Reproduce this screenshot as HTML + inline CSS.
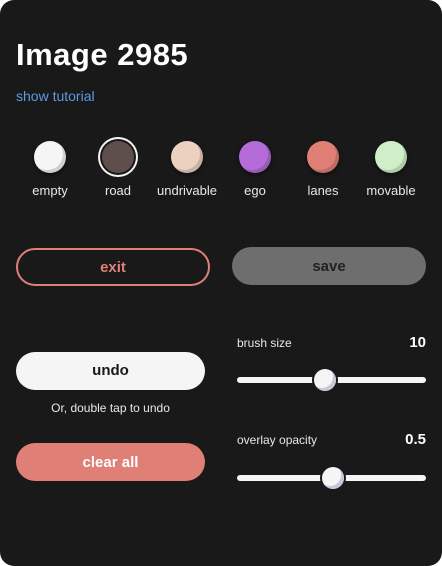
<!DOCTYPE html><html><head><style>
body{margin:0;width:442px;height:566px;background:#fff;font-family:"Liberation Sans",sans-serif;overflow:hidden}
.p{position:absolute;left:0;top:0;width:442px;height:566px;background:#19191a;border-radius:14px}
.a{position:absolute}
.c{position:absolute;width:32px;height:32px;border-radius:50%;top:141px;box-shadow:inset -3px -3px 0 rgba(0,0,0,.15),0 2px 4px rgba(0,0,0,.5)}
.l{position:absolute;top:183px;width:80px;text-align:center;color:#e8e8e8;font-size:13px}
.btn{position:absolute;border-radius:19px;text-align:center;font-weight:bold;font-size:15px;box-sizing:border-box}
.tr{position:absolute;left:237px;width:189px;height:6px;border-radius:3px;background:#f5f5f5}
.th{position:absolute;width:22px;height:22px;border-radius:50%;background:#f5f5f5;box-shadow:inset -3px -3px 0 #c8c8d8,0 0 0 2px #19191a}
</style></head><body><div class="p">
<div class="a" style="left:16px;top:37px;color:#fff;font-size:31px;font-weight:bold;letter-spacing:0.5px">Image 2985</div>
<div class="a" style="left:16px;top:88px;color:#5b9be0;font-size:14px">show tutorial</div>
<div class="c" style="left:34px;background:#f5f5f5"></div>
<div class="c" style="left:102px;background:#5e4e4c;box-shadow:0 0 0 2px #19191a,0 0 0 4px #f5f5f5"></div>
<div class="c" style="left:171px;background:#ecd0c0"></div>
<div class="c" style="left:239px;background:#b56cd8"></div>
<div class="c" style="left:307px;background:#e07f76"></div>
<div class="c" style="left:375px;background:#d0efc8"></div>
<div class="l" style="left:10px">empty</div>
<div class="l" style="left:78px">road</div>
<div class="l" style="left:147px">undrivable</div>
<div class="l" style="left:215px">ego</div>
<div class="l" style="left:283px">lanes</div>
<div class="l" style="left:351px">movable</div>
<div class="btn" style="left:16px;top:248px;width:194px;height:38px;border:2px solid #e07f76;color:#e07f76;line-height:36px">exit</div>
<div class="btn" style="left:232px;top:247px;width:194px;height:38px;background:#6e6e6e;color:#222;line-height:40px">save</div>
<div class="btn" style="left:16px;top:352px;width:189px;height:38px;background:#f5f5f5;color:#19191a;line-height:38px">undo</div>
<div class="a" style="left:16px;top:401px;width:189px;text-align:center;color:#e8e8e8;font-size:12px">Or, double tap to undo</div>
<div class="btn" style="left:16px;top:443px;width:189px;height:38px;background:#e07f76;color:#fff;line-height:39px">clear all</div>
<div class="a" style="left:237px;top:336px;color:#e8e8e8;font-size:12px">brush size</div>
<div class="a" style="left:380px;top:334px;width:46px;text-align:right;color:#fff;font-size:15px;font-weight:bold">10</div>
<div class="tr" style="top:377px"></div><div class="th" style="left:314px;top:369px"></div>
<div class="a" style="left:237px;top:433px;color:#e8e8e8;font-size:12px">overlay opacity</div>
<div class="a" style="left:380px;top:431px;width:46px;text-align:right;color:#fff;font-size:15px;font-weight:bold">0.5</div>
<div class="tr" style="top:475px"></div><div class="th" style="left:322px;top:467px"></div>
</div></body></html>
